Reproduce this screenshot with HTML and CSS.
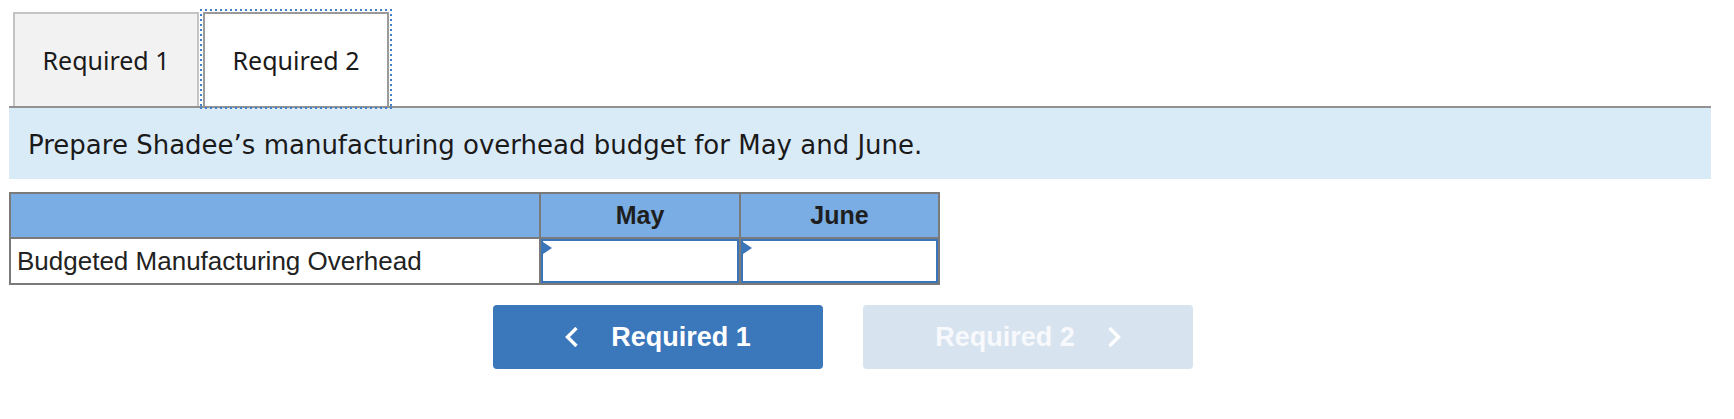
FILE: index.html
```html
<!DOCTYPE html>
<html lang="en">
<head>
<meta charset="utf-8">
<title>Manufacturing overhead budget</title>
<link rel="stylesheet" href="styles.css">
</head>
<body>
<div class="page">
  <div class="tabs">
    <div class="tab">Required 1</div>
    <div class="tab tab-active">Required 2</div>
  </div>
  <div class="prompt">Prepare Shadee’s manufacturing overhead budget for May and June.</div>
  <div class="sheet">
    <div class="cell head"></div>
    <div class="cell head center">May</div>
    <div class="cell head center">June</div>
    <div class="cell label">Budgeted Manufacturing Overhead</div>
    <div class="cell entry"><div class="input"></div></div>
    <div class="cell entry"><div class="input"></div></div>
  </div>
  <div class="nav">
    <button class="btn btn-prev" type="button">
      <svg class="chev" width="13" height="20" viewBox="0 0 13 20"><polyline points="11.5,1 2.5,10 11.5,19" fill="none" stroke="#fff" stroke-width="3.4"/></svg>
      <span>Required 1</span>
    </button>
    <button class="btn btn-next" type="button">
      <span>Required 2</span>
      <svg class="chev" width="13" height="20" viewBox="0 0 13 20"><polyline points="1.5,1 10.5,10 1.5,19" fill="none" stroke="#fff" stroke-width="3.4"/></svg>
    </button>
  </div>
</div>
</body>
</html>
```
FILE: styles.css
```css
html, body {
  background: #ffffff;
}
body {
  margin: 8px;
}
.page {
  margin-left: 1px;
  width: 1702px;
}
.tabs {
  display: flex;
  gap: 4px;
  padding: 4px 0 0 4px;
  border-bottom: 2px solid #929292;
}
.tab {
  position: relative;
  box-sizing: border-box;
  width: 186px;
  height: 94px;
  display: flex;
  align-items: center;
  justify-content: center;
  background: #f2f2f2;
  border: 2px solid #c4c4c4;
  border-bottom: 0;
  font-family: "Noto Sans", "Open Sans", sans-serif;
  font-size: 25px;
  color: #1a1a1a;
}
.tab-active {
  background: #ffffff;
  border-color: #9a9a9a;
}
.tab-active::after {
  content: "";
  position: absolute;
  top: -5px;
  left: -5px;
  right: -5px;
  bottom: -3px;
  pointer-events: none;
  background:
    repeating-linear-gradient(to right, #3f80cc 0 2px, transparent 2px 5px) left top / 100% 2px no-repeat,
    repeating-linear-gradient(to right, #3f80cc 0 2px, transparent 2px 5px) left bottom / 100% 2px no-repeat,
    repeating-linear-gradient(to bottom, #3f80cc 0 2px, transparent 2px 5px) left top / 2px 100% no-repeat,
    repeating-linear-gradient(to bottom, #3f80cc 0 2px, transparent 2px 5px) right top / 2px 100% no-repeat;
}
.prompt {
  background: #daebf8;
  padding: 22px 19px 19px;
  font-family: "DejaVu Sans", Verdana, sans-serif;
  font-size: 26px;
  line-height: 30px;
  color: #1a1a1a;
}
.sheet {
  margin-top: 13px;
  display: grid;
  grid-template-columns: 528px 198px 197px;
  grid-template-rows: 43px 44px;
  gap: 2px;
  padding: 2px;
  width: max-content;
  background: #7a7a7a;
  font-family: "Liberation Sans", Arial, sans-serif;
  color: #222222;
}
.cell {
  display: flex;
  align-items: center;
  background: #ffffff;
}
.head {
  background: #79ade4;
  font-weight: bold;
  font-size: 25px;
  color: #1e1e1e;
}
.center {
  justify-content: center;
}
.label {
  padding-left: 6px;
  font-size: 26px;
}
.entry {
  align-items: stretch;
}
.input {
  position: relative;
  flex: 1;
  border: 2px solid #3a75b9;
}
.input::before {
  content: "";
  position: absolute;
  top: 1px;
  left: 0;
  border-left: 9px solid #3a75b9;
  border-top: 6px solid transparent;
  border-bottom: 6px solid transparent;
}
.nav {
  margin-top: 20px;
  display: flex;
  gap: 40px;
  padding-left: 484px;
}
.btn {
  box-sizing: border-box;
  width: 330px;
  height: 64px;
  display: flex;
  align-items: center;
  justify-content: center;
  gap: 33px;
  border: 0;
  border-radius: 4px;
  padding: 0;
  font-family: "Liberation Sans", Arial, sans-serif;
  font-weight: bold;
  font-size: 27px;
  color: #ffffff;
}
.btn-prev {
  background: #3b77bb;
}
.btn-next {
  background: #d8e3f0;
  color: #f7f9fc;
}
.chev {
  display: block;
}
```
